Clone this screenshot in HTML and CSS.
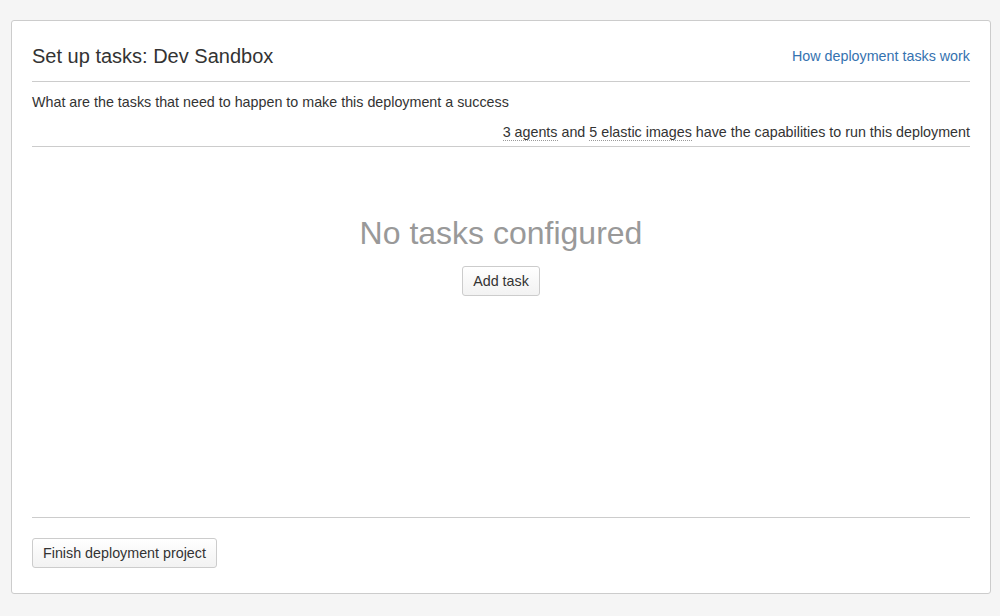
FILE: index.html
```html
<!DOCTYPE html>
<html>
<head>
<meta charset="utf-8">
<link rel="stylesheet" href="styles.css">
</head>
<body>
<div class="panel">
  <div class="header">
    <h1 class="title">Set up tasks: Dev Sandbox</h1>
    <a class="help" href="#">How deployment tasks work</a>
  </div>
  <div class="intro">
    <p class="desc">What are the tasks that need to happen to make this deployment a success</p>
    <p class="caps"><span class="dotted">3 agents</span> and <span class="dotted">5 elastic images</span> have the capabilities to run this deployment</p>
  </div>
  <div class="main">
    <h2 class="empty">No tasks configured</h2>
    <button class="btn">Add task</button>
  </div>
  <div class="footer">
    <button class="btn">Finish deployment project</button>
  </div>
</div>
</body>
</html>
```
FILE: styles.css
```css
html, body {
  margin: 0;
  padding: 0;
}
body {
  background: #f5f5f5;
  font-family: "Liberation Sans", Arial, sans-serif;
  font-size: 14.3px;
  color: #333;
  padding: 20px 9px 22px 11px;
}
.panel {
  box-sizing: border-box;
  height: 574px;
  background: #fff;
  border: 1px solid #ccc;
  border-radius: 3px;
  padding: 0 20px;
  display: flex;
  flex-direction: column;
}
.header {
  display: flex;
  justify-content: space-between;
  align-items: center;
  border-bottom: 1px solid #ccc;
  padding: 23px 0 13px;
}
.title {
  margin: 0;
  font-size: 20px;
  font-weight: normal;
  line-height: 24px;
}
.help {
  color: #3572b0;
  text-decoration: none;
  font-size: 14.3px;
}
.intro {
  border-bottom: 1px solid #ccc;
  padding: 10px 0 4px;
}
.desc {
  margin: 0;
  line-height: 20px;
}
.caps {
  margin: 10px 0 0;
  text-align: right;
  line-height: 20px;
}
.dotted {
  border-bottom: 1px dotted #999;
}
.main {
  flex: 1;
  display: flex;
  flex-direction: column;
  align-items: center;
  padding-top: 68px;
  border-bottom: 1px solid #ccc;
}
.empty {
  margin: 0;
  font-size: 32px;
  font-weight: normal;
  color: #999;
  line-height: 36px;
}
.btn {
  margin-top: 15px;
  height: 30px;
  padding: 0 10px;
  font-family: "Liberation Sans", Arial, sans-serif;
  font-size: 14.3px;
  color: #333;
  background: linear-gradient(#fff, #f2f2f2);
  border: 1px solid #ccc;
  border-radius: 3.01px;
}
.footer {
  padding: 20px 0 25px;
}
.footer .btn {
  margin-top: 0;
}
```
